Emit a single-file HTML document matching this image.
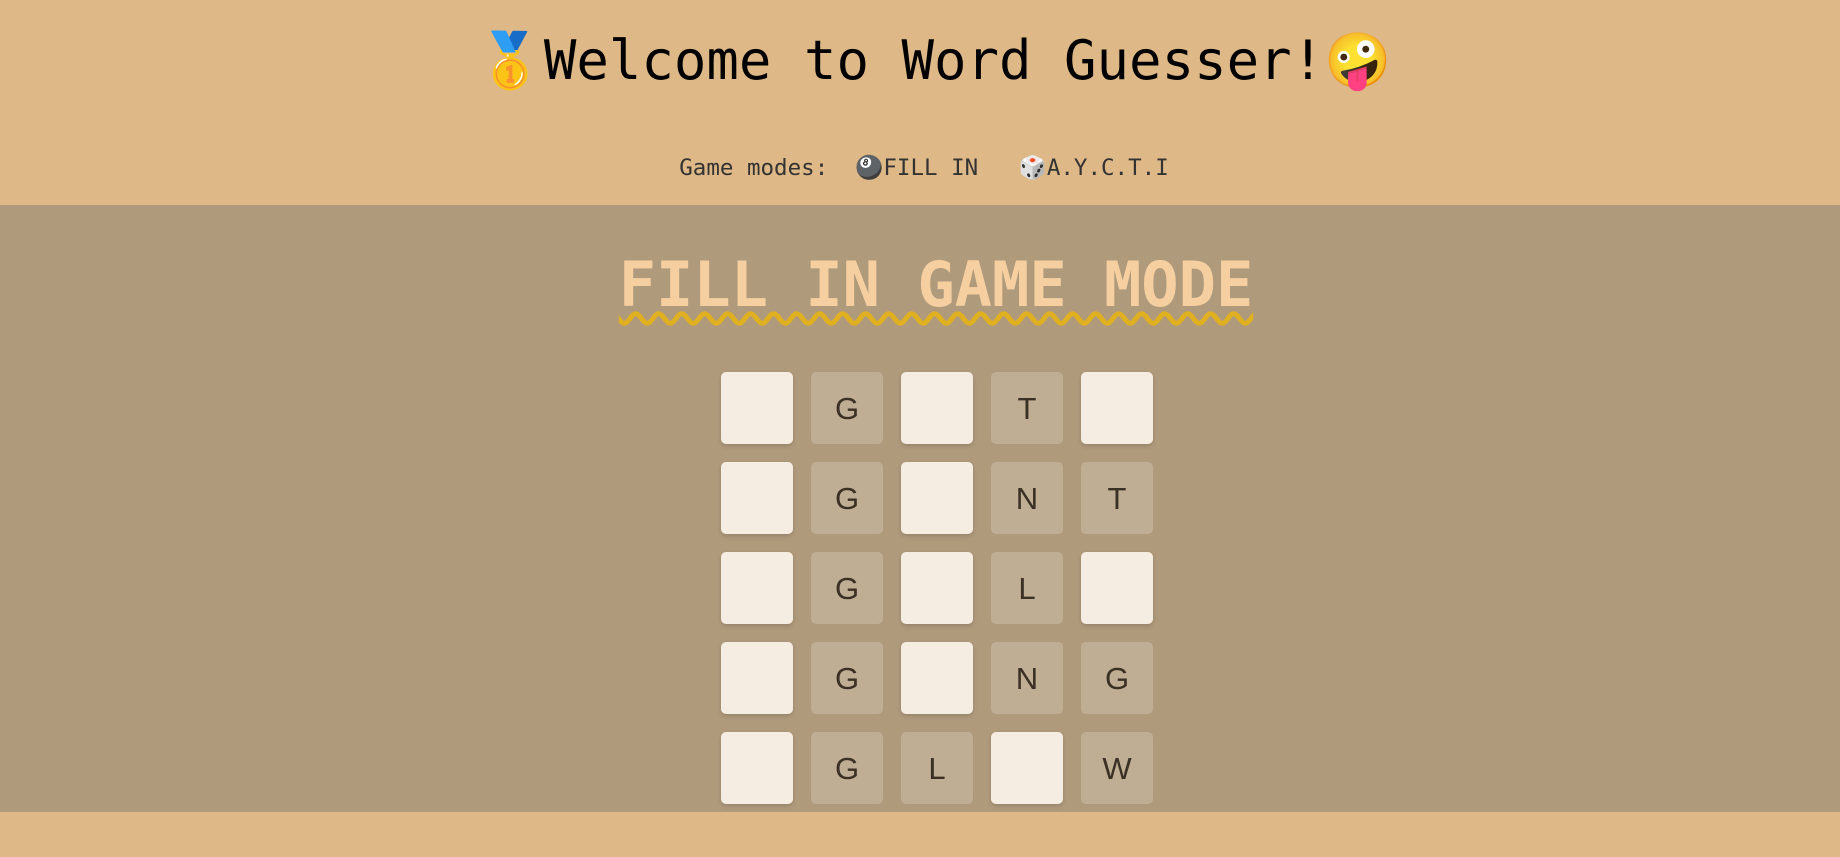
<!DOCTYPE html>
<html><head><style>
html,body{margin:0;width:1840px;height:857px;overflow:hidden;background:#deb887;font-family:"DejaVu Sans Mono","Liberation Mono",monospace;}
.title{position:absolute;top:26px;left:14px;width:1840px;text-align:center;font-size:54px;color:#000;line-height:70px;white-space:nowrap}
.modes{position:absolute;top:155px;left:4px;width:1840px;text-align:center;font-size:22.5px;color:#333;white-space:nowrap}
.band{position:absolute;top:205px;left:0;width:1840px;height:607px;background:#b09a7c}
.h{position:absolute;top:248px;left:16px;width:1840px;text-align:center;font-size:62px;font-weight:bold;color:#f5cfa0;text-decoration:underline wavy #e0b020;text-decoration-thickness:5px;text-underline-offset:6px;white-space:nowrap}
.t{position:absolute;width:72px;height:72px;border-radius:5px;font-family:"Liberation Sans",sans-serif;font-size:31px;color:#3b3024;text-align:center;line-height:74px}
.l{background:#f6ede2;box-shadow:0 2px 4px rgba(0,0,0,.15)}
.d{background:#bfad94}
</style></head><body>
<div class="title">🥇Welcome to Word Guesser!🤪</div>
<div class="modes">Game modes: &nbsp;🎱FILL IN &nbsp; 🎲A.Y.C.T.I</div>
<div class="band"></div>
<div class="h">FILL IN GAME MODE</div>
<div class="t l" style="left:721px;top:372px"></div><div class="t d" style="left:811px;top:372px">G</div><div class="t l" style="left:901px;top:372px"></div><div class="t d" style="left:991px;top:372px">T</div><div class="t l" style="left:1081px;top:372px"></div>
<div class="t l" style="left:721px;top:462px"></div><div class="t d" style="left:811px;top:462px">G</div><div class="t l" style="left:901px;top:462px"></div><div class="t d" style="left:991px;top:462px">N</div><div class="t d" style="left:1081px;top:462px">T</div>
<div class="t l" style="left:721px;top:552px"></div><div class="t d" style="left:811px;top:552px">G</div><div class="t l" style="left:901px;top:552px"></div><div class="t d" style="left:991px;top:552px">L</div><div class="t l" style="left:1081px;top:552px"></div>
<div class="t l" style="left:721px;top:642px"></div><div class="t d" style="left:811px;top:642px">G</div><div class="t l" style="left:901px;top:642px"></div><div class="t d" style="left:991px;top:642px">N</div><div class="t d" style="left:1081px;top:642px">G</div>
<div class="t l" style="left:721px;top:732px"></div><div class="t d" style="left:811px;top:732px">G</div><div class="t d" style="left:901px;top:732px">L</div><div class="t l" style="left:991px;top:732px"></div><div class="t d" style="left:1081px;top:732px">W</div>
</body></html>
